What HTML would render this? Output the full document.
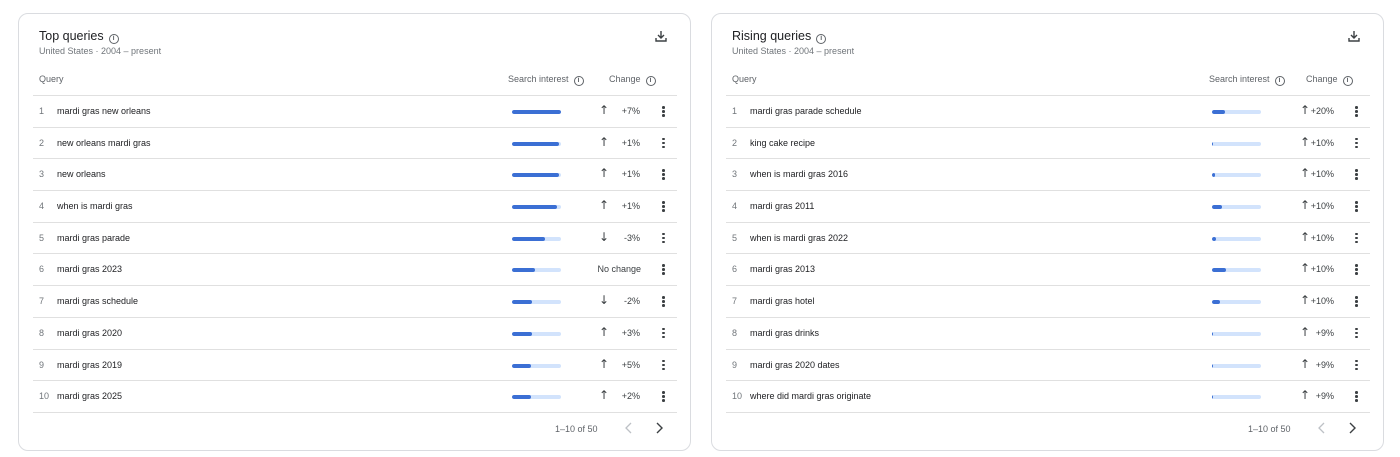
<!DOCTYPE html>
<html><head><meta charset="utf-8"><style>
*{box-sizing:border-box;margin:0;padding:0}
body{width:1400px;height:457px;background:#fff;font-family:"Liberation Sans",Arial,sans-serif;color:#202124;position:relative;overflow:hidden}
.card{position:absolute;top:13px;width:673px;height:438px;border:1px solid #dadce0;border-radius:10px;background:#fff}
.title{position:absolute;left:20px;top:15px;font-size:12.5px;color:#202124}
.sub{position:absolute;left:20px;top:32px;font-size:9px;color:#70757a}
.info{display:inline-block;width:10px;height:10px;border:1px solid #5f6368;border-radius:50%;font-size:7px;line-height:8px;text-align:center;color:#5f6368;vertical-align:0px;margin-left:5px;font-weight:bold}
.dl{position:absolute;left:636px;top:16px}
.hdr{position:absolute;top:60px;font-size:9px;color:#5f6368}
.rows{position:absolute;left:14px;top:81px;width:644px;border-top:1px solid #e0e0e0}
.row{height:31.7px;border-bottom:1px solid #e0e0e0;position:relative;font-size:9px}
.row span{position:absolute;top:10px}
.n{left:6px;color:#70757a}
.q{left:24px;color:#202124}
.bar{position:absolute;top:14px;width:49px;height:4px;border-radius:2px;background:#d2e3fc;overflow:hidden}
.bar i{display:block;height:100%;background:#3b6fd4;border-radius:2px}
.ar{font-family:"DejaVu Sans",sans-serif;font-size:12px;top:7px!important;color:#3c4043}
.pc{color:#3c4043;text-align:right;width:40px}
.dots{position:absolute;left:629px;top:10px;width:3px}
.dots b{display:block;width:2.5px;height:2.5px;background:#3c4043;border-radius:50%;margin-bottom:1.5px}
.foot{position:absolute;top:410px;font-size:9px;color:#5f6368}
.chev{position:absolute;top:408px}
</style></head><body>

<div class="card" style="left:18px">
<div class="title">Top queries<span class="info">i</span></div>
<div class="sub">United States · 2004 – present</div>
<svg class="dl" width="12" height="12" viewBox="0 0 12 12"><path d="M6 1v7M3 5l3 3 3-3M1 8v3h10V8" fill="none" stroke="#3c4043" stroke-width="1.4"/></svg>
<div class="hdr" style="left:20px">Query</div>
<div class="hdr" style="left:489px">Search interest<span class="info">i</span></div>
<div class="hdr" style="left:590px">Change<span class="info">i</span></div>
<div class="rows">
<div class="row"><span class="n">1</span><span class="q">mardi gras new orleans</span><div class="bar" style="left:479px"><i style="width:49px"></i></div><span class="ar" style="left:566px">↑</span><span class="pc" style="left:567px">+7%</span><div class="dots"><b></b><b></b><b></b></div></div>
<div class="row"><span class="n">2</span><span class="q">new orleans mardi gras</span><div class="bar" style="left:479px"><i style="width:47px"></i></div><span class="ar" style="left:566px">↑</span><span class="pc" style="left:567px">+1%</span><div class="dots"><b></b><b></b><b></b></div></div>
<div class="row"><span class="n">3</span><span class="q">new orleans</span><div class="bar" style="left:479px"><i style="width:47px"></i></div><span class="ar" style="left:566px">↑</span><span class="pc" style="left:567px">+1%</span><div class="dots"><b></b><b></b><b></b></div></div>
<div class="row"><span class="n">4</span><span class="q">when is mardi gras</span><div class="bar" style="left:479px"><i style="width:45px"></i></div><span class="ar" style="left:566px">↑</span><span class="pc" style="left:567px">+1%</span><div class="dots"><b></b><b></b><b></b></div></div>
<div class="row"><span class="n">5</span><span class="q">mardi gras parade</span><div class="bar" style="left:479px"><i style="width:33px"></i></div><span class="ar" style="left:566px">↓</span><span class="pc" style="left:567px">-3%</span><div class="dots"><b></b><b></b><b></b></div></div>
<div class="row"><span class="n">6</span><span class="q">mardi gras 2023</span><div class="bar" style="left:479px"><i style="width:23px"></i></div><span class="pc" style="left:548px;width:60px">No change</span><div class="dots"><b></b><b></b><b></b></div></div>
<div class="row"><span class="n">7</span><span class="q">mardi gras schedule</span><div class="bar" style="left:479px"><i style="width:20px"></i></div><span class="ar" style="left:566px">↓</span><span class="pc" style="left:567px">-2%</span><div class="dots"><b></b><b></b><b></b></div></div>
<div class="row"><span class="n">8</span><span class="q">mardi gras 2020</span><div class="bar" style="left:479px"><i style="width:20px"></i></div><span class="ar" style="left:566px">↑</span><span class="pc" style="left:567px">+3%</span><div class="dots"><b></b><b></b><b></b></div></div>
<div class="row"><span class="n">9</span><span class="q">mardi gras 2019</span><div class="bar" style="left:479px"><i style="width:19px"></i></div><span class="ar" style="left:566px">↑</span><span class="pc" style="left:567px">+5%</span><div class="dots"><b></b><b></b><b></b></div></div>
<div class="row"><span class="n">10</span><span class="q">mardi gras 2025</span><div class="bar" style="left:479px"><i style="width:19px"></i></div><span class="ar" style="left:566px">↑</span><span class="pc" style="left:567px">+2%</span><div class="dots"><b></b><b></b><b></b></div></div>
</div>
<div class="foot" style="left:536px">1–10 of 50</div>
<svg class="chev" style="left:605px" width="10" height="12" viewBox="0 0 10 12"><path d="M7 1L2 6l5 5" fill="none" stroke="#bdc1c6" stroke-width="1.3"/></svg>
<svg class="chev" style="left:635px" width="10" height="12" viewBox="0 0 10 12"><path d="M3 1l5 5-5 5" fill="none" stroke="#3c4043" stroke-width="1.4"/></svg>
</div>

<div class="card" style="left:711px">
<div class="title">Rising queries<span class="info">i</span></div>
<div class="sub">United States · 2004 – present</div>
<svg class="dl" width="12" height="12" viewBox="0 0 12 12"><path d="M6 1v7M3 5l3 3 3-3M1 8v3h10V8" fill="none" stroke="#3c4043" stroke-width="1.4"/></svg>
<div class="hdr" style="left:20px">Query</div>
<div class="hdr" style="left:497px">Search interest<span class="info">i</span></div>
<div class="hdr" style="left:594px">Change<span class="info">i</span></div>
<div class="rows">
<div class="row"><span class="n">1</span><span class="q">mardi gras parade schedule</span><div class="bar" style="left:486px"><i style="width:13px"></i></div><span class="ar" style="left:574px">↑</span><span class="pc" style="left:568px">+20%</span><div class="dots"><b></b><b></b><b></b></div></div>
<div class="row"><span class="n">2</span><span class="q">king cake recipe</span><div class="bar" style="left:486px"><i style="width:1px"></i></div><span class="ar" style="left:574px">↑</span><span class="pc" style="left:568px">+10%</span><div class="dots"><b></b><b></b><b></b></div></div>
<div class="row"><span class="n">3</span><span class="q">when is mardi gras 2016</span><div class="bar" style="left:486px"><i style="width:3px"></i></div><span class="ar" style="left:574px">↑</span><span class="pc" style="left:568px">+10%</span><div class="dots"><b></b><b></b><b></b></div></div>
<div class="row"><span class="n">4</span><span class="q">mardi gras 2011</span><div class="bar" style="left:486px"><i style="width:10px"></i></div><span class="ar" style="left:574px">↑</span><span class="pc" style="left:568px">+10%</span><div class="dots"><b></b><b></b><b></b></div></div>
<div class="row"><span class="n">5</span><span class="q">when is mardi gras 2022</span><div class="bar" style="left:486px"><i style="width:4px"></i></div><span class="ar" style="left:574px">↑</span><span class="pc" style="left:568px">+10%</span><div class="dots"><b></b><b></b><b></b></div></div>
<div class="row"><span class="n">6</span><span class="q">mardi gras 2013</span><div class="bar" style="left:486px"><i style="width:14px"></i></div><span class="ar" style="left:574px">↑</span><span class="pc" style="left:568px">+10%</span><div class="dots"><b></b><b></b><b></b></div></div>
<div class="row"><span class="n">7</span><span class="q">mardi gras hotel</span><div class="bar" style="left:486px"><i style="width:8px"></i></div><span class="ar" style="left:574px">↑</span><span class="pc" style="left:568px">+10%</span><div class="dots"><b></b><b></b><b></b></div></div>
<div class="row"><span class="n">8</span><span class="q">mardi gras drinks</span><div class="bar" style="left:486px"><i style="width:1px"></i></div><span class="ar" style="left:574px">↑</span><span class="pc" style="left:568px">+9%</span><div class="dots"><b></b><b></b><b></b></div></div>
<div class="row"><span class="n">9</span><span class="q">mardi gras 2020 dates</span><div class="bar" style="left:486px"><i style="width:1px"></i></div><span class="ar" style="left:574px">↑</span><span class="pc" style="left:568px">+9%</span><div class="dots"><b></b><b></b><b></b></div></div>
<div class="row"><span class="n">10</span><span class="q">where did mardi gras originate</span><div class="bar" style="left:486px"><i style="width:1px"></i></div><span class="ar" style="left:574px">↑</span><span class="pc" style="left:568px">+9%</span><div class="dots"><b></b><b></b><b></b></div></div>
</div>
<div class="foot" style="left:536px">1–10 of 50</div>
<svg class="chev" style="left:605px" width="10" height="12" viewBox="0 0 10 12"><path d="M7 1L2 6l5 5" fill="none" stroke="#bdc1c6" stroke-width="1.3"/></svg>
<svg class="chev" style="left:635px" width="10" height="12" viewBox="0 0 10 12"><path d="M3 1l5 5-5 5" fill="none" stroke="#3c4043" stroke-width="1.4"/></svg>
</div>
</body></html>
